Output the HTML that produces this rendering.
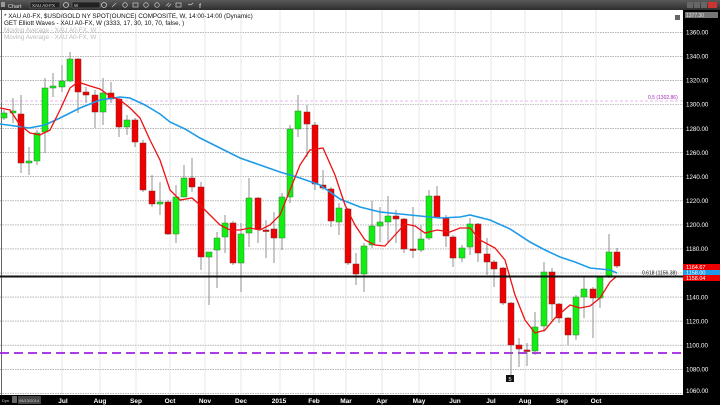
<!DOCTYPE html>
<html><head><meta charset="utf-8"><style>
html,body{margin:0;padding:0;background:#fff;}
svg{display:block;font-family:"Liberation Sans",sans-serif;}
</style></head><body>
<svg width="720" height="405" viewBox="0 0 720 405" xmlns="http://www.w3.org/2000/svg">
<defs><linearGradient id="tb" x1="0" y1="0" x2="0" y2="1"><stop offset="0" stop-color="#5a5a5a"/><stop offset="1" stop-color="#2e2e2e"/></linearGradient></defs>
<rect x="0" y="0" width="720" height="405" fill="#fff"/>
<!-- toolbar -->
<rect x="0" y="0" width="720" height="10" fill="url(#tb)"/>
<rect x="1" y="2" width="4" height="5" fill="#999"/>
<text x="8" y="8" font-size="5.5" fill="#ddd">Chart</text>
<rect x="30" y="2" width="30" height="6" fill="#222" stroke="#777" stroke-width="0.5"/>
<text x="32" y="7" font-size="4.5" fill="#ccc">XAU A0-FX</text>
<circle cx="66" cy="5" r="2.5" fill="none" stroke="#ccc" stroke-width="0.8"/>
<rect x="72" y="2" width="28" height="6" fill="#222" stroke="#777" stroke-width="0.5"/>
<text x="74" y="7" font-size="4.5" fill="#ccc">W</text>
<circle cx="104" cy="5" r="2.5" fill="none" stroke="#ccc" stroke-width="0.8"/>
<g fill="none" stroke="#bbb" stroke-width="0.8">
<path d="M112 7 L116 3"/><circle cx="125" cy="5" r="2.3"/><rect x="133" y="3" width="5" height="4"/><circle cx="146" cy="5" r="2.3"/><circle cx="157" cy="5" r="2.3"/><path d="M166 6 l3 -3 M168 7 l3 -3"/><rect x="176" y="3" width="5" height="4"/><path d="M188 4 q3 2 5 -1"/>
</g>
<text x="199" y="8" font-size="6" fill="#ccc" font-weight="bold">f</text>
<rect x="687" y="2" width="6" height="6" fill="#666"/><rect x="694" y="2" width="6" height="6" fill="#666"/><rect x="701" y="2" width="6" height="6" fill="#666"/><rect x="708" y="2" width="9" height="6" fill="#c33"/>
<!-- grid -->
<g stroke="#888" stroke-width="0.6" stroke-dasharray="1.5,1">
<line x1="0" y1="32.3" x2="683" y2="32.3"/><line x1="0" y1="56.4" x2="683" y2="56.4"/><line x1="0" y1="80.4" x2="683" y2="80.4"/><line x1="0" y1="104.5" x2="683" y2="104.5"/><line x1="0" y1="128.6" x2="683" y2="128.6"/><line x1="0" y1="152.6" x2="683" y2="152.6"/><line x1="0" y1="176.7" x2="683" y2="176.7"/><line x1="0" y1="200.8" x2="683" y2="200.8"/><line x1="0" y1="224.9" x2="683" y2="224.9"/><line x1="0" y1="248.9" x2="683" y2="248.9"/><line x1="0" y1="273" x2="683" y2="273"/><line x1="0" y1="297.1" x2="683" y2="297.1"/><line x1="0" y1="321.1" x2="683" y2="321.1"/><line x1="0" y1="345.2" x2="683" y2="345.2"/><line x1="0" y1="369.3" x2="683" y2="369.3"/><line x1="0" y1="393.3" x2="683" y2="393.3"/>
</g>
<g stroke="#ddd" stroke-width="0.7">
<line x1="62" y1="10" x2="62" y2="395"/><line x1="100" y1="10" x2="100" y2="395"/><line x1="136" y1="10" x2="136" y2="395"/><line x1="170" y1="10" x2="170" y2="395"/><line x1="205" y1="10" x2="205" y2="395"/><line x1="241" y1="10" x2="241" y2="395"/><line x1="280" y1="10" x2="280" y2="395"/><line x1="314" y1="10" x2="314" y2="395"/><line x1="346" y1="10" x2="346" y2="395"/><line x1="382" y1="10" x2="382" y2="395"/><line x1="419" y1="10" x2="419" y2="395"/><line x1="455" y1="10" x2="455" y2="395"/><line x1="491" y1="10" x2="491" y2="395"/><line x1="525" y1="10" x2="525" y2="395"/><line x1="562" y1="10" x2="562" y2="395"/><line x1="596" y1="10" x2="596" y2="395"/>
</g>
<line x1="1.5" y1="10" x2="1.5" y2="395" stroke="#666" stroke-width="1"/>
<!-- header text -->
<text x="4" y="18" font-size="6.3" fill="#111">* XAU A0-FX, $USD/GOLD NY SPOT(OUNCE) COMPOSITE, W, 14:00-14:00 (Dynamic)</text>
<text x="4" y="25" font-size="6.3" fill="#111">GET Elliott Waves - XAU A0-FX, W (3333, 17, 30, 10, 70, false, )</text>
<text x="4" y="32" font-size="6.3" fill="#bbb">Moving Average - XAU A0-FX, W</text>
<text x="4" y="39" font-size="6.3" fill="#bbb">Moving Average - XAU A0-FX, W</text>
<rect x="675" y="15" width="5" height="5" fill="#666"/>
<!-- fib lines -->
<line x1="0" y1="101" x2="683" y2="101" stroke="#e8b8f0" stroke-width="1" stroke-dasharray="3,2"/>
<text x="648" y="99" font-size="5" fill="#9a2ab0">0.5 (1302.86)</text>
<line x1="0" y1="353" x2="683" y2="353" stroke="#a020e0" stroke-width="1.8" stroke-dasharray="9,5"/>
<!-- candles -->
<g stroke="#777" stroke-width="0.8">
<line x1="4" y1="110" x2="4" y2="120"/><line x1="13" y1="98" x2="13" y2="123"/><line x1="21" y1="95" x2="21" y2="173"/><line x1="29" y1="147" x2="29" y2="175"/><line x1="37" y1="130" x2="37" y2="165"/><line x1="45" y1="78" x2="45" y2="153"/><line x1="53" y1="73" x2="53" y2="97"/><line x1="62" y1="65" x2="62" y2="92"/><line x1="70" y1="52" x2="70" y2="82"/><line x1="78" y1="58" x2="78" y2="113"/><line x1="86" y1="87" x2="86" y2="103"/><line x1="95" y1="90" x2="95" y2="128"/><line x1="103" y1="78" x2="103" y2="125"/><line x1="111" y1="82" x2="111" y2="103"/><line x1="119" y1="98" x2="119" y2="137"/><line x1="127" y1="115" x2="127" y2="135"/><line x1="135" y1="118" x2="135" y2="147"/><line x1="143" y1="140" x2="143" y2="192"/><line x1="152" y1="175" x2="152" y2="207"/><line x1="160" y1="182" x2="160" y2="215"/><line x1="168" y1="200" x2="168" y2="235"/><line x1="176" y1="185" x2="176" y2="243"/><line x1="184" y1="165" x2="184" y2="197"/><line x1="192" y1="158" x2="192" y2="192"/><line x1="201" y1="182" x2="201" y2="270"/><line x1="209" y1="252" x2="209" y2="305"/><line x1="217" y1="232" x2="217" y2="288"/><line x1="225" y1="215" x2="225" y2="253"/><line x1="233" y1="221" x2="233" y2="265"/><line x1="241" y1="223" x2="241" y2="292"/><line x1="249" y1="178" x2="249" y2="247"/><line x1="258" y1="197" x2="258" y2="243"/><line x1="266" y1="220" x2="266" y2="258"/><line x1="274" y1="212" x2="274" y2="263"/><line x1="282" y1="193" x2="282" y2="250"/><line x1="290" y1="125" x2="290" y2="203"/><line x1="298" y1="95" x2="298" y2="137"/><line x1="307" y1="105" x2="307" y2="157"/><line x1="315" y1="122" x2="315" y2="190"/><line x1="323" y1="170" x2="323" y2="190"/><line x1="331" y1="187" x2="331" y2="227"/><line x1="339" y1="203" x2="339" y2="235"/><line x1="348" y1="208" x2="348" y2="265"/><line x1="356" y1="253" x2="356" y2="285"/><line x1="364" y1="243" x2="364" y2="292"/><line x1="372" y1="201" x2="372" y2="248"/><line x1="380" y1="207" x2="380" y2="242"/><line x1="388" y1="196" x2="388" y2="243"/><line x1="396" y1="210" x2="396" y2="243"/><line x1="404" y1="218" x2="404" y2="253"/><line x1="413" y1="207" x2="413" y2="258"/><line x1="421" y1="225" x2="421" y2="252"/><line x1="429" y1="190" x2="429" y2="240"/><line x1="437" y1="186" x2="437" y2="218"/><line x1="446" y1="215" x2="446" y2="247"/><line x1="453" y1="235" x2="453" y2="267"/><line x1="462" y1="245" x2="462" y2="262"/><line x1="470" y1="218" x2="470" y2="255"/><line x1="478" y1="223" x2="478" y2="262"/><line x1="487" y1="238" x2="487" y2="275"/><line x1="494" y1="260" x2="494" y2="287"/><line x1="503" y1="267" x2="503" y2="305"/><line x1="511" y1="302" x2="511" y2="375"/><line x1="519" y1="338" x2="519" y2="367"/><line x1="527" y1="343" x2="527" y2="366"/><line x1="535" y1="312" x2="535" y2="355"/><line x1="544" y1="262" x2="544" y2="332"/><line x1="552" y1="268" x2="552" y2="320"/><line x1="559" y1="303" x2="559" y2="323"/><line x1="568" y1="317" x2="568" y2="345"/><line x1="576" y1="295" x2="576" y2="340"/><line x1="584" y1="277" x2="584" y2="318"/><line x1="593" y1="287" x2="593" y2="338"/><line x1="600" y1="276" x2="600" y2="308"/><line x1="609" y1="234" x2="609" y2="278"/><line x1="617" y1="248" x2="617" y2="268"/>
</g>
<g fill="#11ee11" stroke="#3a7a3a" stroke-width="0.5">
<rect x="1" y="113" width="6" height="5"/><rect x="10" y="111" width="6" height="2"/><rect x="26" y="161" width="6" height="2"/><rect x="34" y="133" width="6" height="28"/><rect x="42" y="88" width="6" height="44"/><rect x="50" y="86" width="6" height="2"/><rect x="59" y="81" width="6" height="6"/><rect x="67" y="59" width="6" height="22"/><rect x="100" y="93" width="6" height="19"/><rect x="124" y="120" width="6" height="7"/><rect x="157" y="202" width="6" height="2"/><rect x="173" y="197" width="6" height="37"/><rect x="181" y="178" width="6" height="19"/><rect x="206" y="252" width="6" height="5"/><rect x="214" y="238" width="6" height="12"/><rect x="222" y="223" width="6" height="14"/><rect x="238" y="234" width="6" height="29"/><rect x="246" y="198" width="6" height="35"/><rect x="279" y="197" width="6" height="41"/><rect x="287" y="129" width="6" height="68"/><rect x="295" y="111" width="6" height="18"/><rect x="336" y="208" width="6" height="14"/><rect x="361" y="246" width="6" height="28"/><rect x="369" y="226" width="6" height="19"/><rect x="377" y="222" width="6" height="4"/><rect x="385" y="216" width="6" height="6"/><rect x="418" y="239" width="6" height="11"/><rect x="426" y="196" width="6" height="42"/><rect x="459" y="248" width="6" height="10"/><rect x="467" y="224" width="6" height="23"/><rect x="532" y="327" width="6" height="24"/><rect x="541" y="272" width="6" height="54"/><rect x="573" y="297" width="6" height="38"/><rect x="581" y="289" width="6" height="8"/><rect x="597" y="277" width="6" height="21"/><rect x="606" y="252" width="6" height="25"/>
</g>
<g fill="#ee0000" stroke="#7a2a2a" stroke-width="0.5">
<rect x="18" y="114" width="6" height="49"/><rect x="75" y="59" width="6" height="33"/><rect x="83" y="92" width="6" height="3"/><rect x="92" y="95" width="6" height="17"/><rect x="108" y="93" width="6" height="6"/><rect x="116" y="99" width="6" height="28"/><rect x="132" y="120" width="6" height="22"/><rect x="140" y="143" width="6" height="47"/><rect x="149" y="191" width="6" height="13"/><rect x="165" y="202" width="6" height="32"/><rect x="189" y="178" width="6" height="9"/><rect x="198" y="187" width="6" height="70"/><rect x="230" y="223" width="6" height="40"/><rect x="255" y="198" width="6" height="31"/><rect x="263" y="230" width="6" height="1.5"/><rect x="271" y="229" width="6" height="9"/><rect x="304" y="112" width="6" height="12"/><rect x="312" y="125" width="6" height="59"/><rect x="320" y="185" width="6" height="3"/><rect x="328" y="189" width="6" height="32"/><rect x="345" y="209" width="6" height="54"/><rect x="353" y="264" width="6" height="10"/><rect x="393" y="216" width="6" height="3"/><rect x="401" y="219" width="6" height="30"/><rect x="410" y="249" width="6" height="1.5"/><rect x="434" y="196" width="6" height="21"/><rect x="443" y="218" width="6" height="18"/><rect x="450" y="237" width="6" height="21"/><rect x="475" y="224" width="6" height="29"/><rect x="484" y="254" width="6" height="8"/><rect x="491" y="262" width="6" height="7"/><rect x="500" y="268" width="6" height="35"/><rect x="508" y="303" width="6" height="42"/><rect x="516" y="345" width="6" height="4"/><rect x="524" y="350" width="6" height="1.5"/><rect x="549" y="272" width="6" height="32"/><rect x="556" y="304" width="6" height="14"/><rect x="565" y="318" width="6" height="17"/><rect x="590" y="289" width="6" height="9"/><rect x="614" y="252" width="6" height="14"/>
</g>
<!-- MAs -->
<polyline fill="none" stroke="#1e9be8" stroke-width="1.6" points="0,124 15,126 29,128 45,125 60,118 80,108 100,100 120,97 130,98 145,105 160,114 170,122 185,129 200,138 220,148 240,158 260,165 280,172 300,178 320,185 340,199 360,207 380,212 400,214 420,216 440,218 460,217 470,215 490,220 510,229 530,242 545,250 560,257 575,262 590,268 610,270 617,273"/>
<polyline fill="none" stroke="#ee1111" stroke-width="1.3" points="0,108 10,110 20,125 30,133 40,135 50,130 60,110 70,88 78,82 90,86 100,89 110,96 120,100 130,108 140,118 150,140 160,160 170,190 180,200 192,198 200,205 210,215 220,225 230,230 240,230 250,228 260,230 270,225 280,215 290,190 300,165 310,150 323,148 335,175 345,205 355,225 365,240 375,245 385,246 395,235 405,224 415,226 425,233 437,230 450,232 460,228 470,228 480,240 495,248 505,260 515,295 525,320 535,333 545,330 555,318 570,305 580,308 590,306 600,298 610,282 617,276"/>
<!-- support line -->
<line x1="0" y1="276.5" x2="683" y2="276.5" stroke="#111" stroke-width="2"/>
<text x="642" y="274.5" font-size="5" fill="#111">0.618 (1156.38)</text>
<rect x="506" y="375" width="8" height="7" fill="#111"/><text x="508.5" y="381" font-size="5.5" fill="#fff">5</text>
<!-- right axis -->
<rect x="683" y="10" width="37" height="395" fill="#000"/>
<rect x="685" y="12" width="33" height="6" fill="#777"/><text x="686" y="17" font-size="5" fill="#ddd">1377.30</text>
<g font-size="6.2" fill="#fff">
<text x="686" y="34.5">1360.00</text><text x="686" y="58.6">1340.00</text><text x="686" y="82.6">1320.00</text><text x="686" y="106.7">1300.00</text><text x="686" y="130.8">1280.00</text><text x="686" y="154.8">1260.00</text><text x="686" y="178.9">1240.00</text><text x="686" y="203">1220.00</text><text x="686" y="227.1">1200.00</text><text x="686" y="251.1">1180.00</text><text x="686" y="299.3">1140.00</text><text x="686" y="323.3">1120.00</text><text x="686" y="347.4">1100.00</text><text x="686" y="371.5">1080.00</text><text x="686" y="393">1060.00</text>
</g>
<rect x="683" y="264" width="37" height="6" fill="#ee0000"/><text x="686" y="269" font-size="5.5" fill="#fff">1164.67</text>
<rect x="683" y="270" width="37" height="5" fill="#1e9be8"/><text x="686" y="274.5" font-size="5.5" fill="#fff">1158.00</text>
<rect x="683" y="275" width="37" height="6" fill="#ee0000"/><text x="686" y="280" font-size="5.5" fill="#fff">1158.04</text>
<!-- bottom axis -->
<rect x="0" y="395" width="720" height="10" fill="#000"/>
<text x="2" y="402" font-size="4" fill="#ccc">Dyn</text>
<rect x="12" y="396" width="5" height="7" fill="#666"/>
<rect x="18" y="396" width="23" height="8" fill="#444"/><text x="19" y="402" font-size="4" fill="#ccc">06/13/2014</text>
<g font-size="6.5" font-weight="bold" fill="#fff" text-anchor="middle">
<text x="63" y="403">Jul</text><text x="100" y="403">Aug</text><text x="136" y="403">Sep</text><text x="170" y="403">Oct</text><text x="205" y="403">Nov</text><text x="241" y="403">Dec</text><text x="279" y="403">2015</text><text x="314" y="403">Feb</text><text x="346" y="403">Mar</text><text x="382" y="403">Apr</text><text x="419" y="403">May</text><text x="455" y="403">Jun</text><text x="491" y="403">Jul</text><text x="525" y="403">Aug</text><text x="562" y="403">Sep</text><text x="596" y="403">Oct</text>
</g>
</svg>
</body></html>
